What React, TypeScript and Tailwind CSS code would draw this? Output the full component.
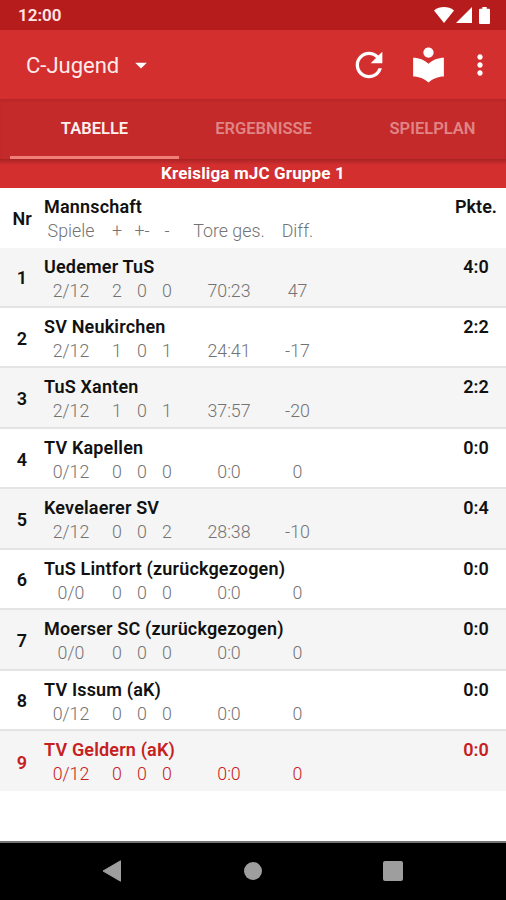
import { MdArrowDropDown, MdLocalLibrary, MdMoreVert, MdRefresh } from 'react-icons/md';

type Team = {
  name: string;
  games: string;
  won: string;
  drawn: string;
  lost: string;
  goals: string;
  diff: string;
  points: string;
  own?: boolean;
};

const teams: Team[] = [
  { name: 'Uedemer TuS', games: '2/12', won: '2', drawn: '0', lost: '0', goals: '70:23', diff: '47', points: '4:0' },
  { name: 'SV Neukirchen', games: '2/12', won: '1', drawn: '0', lost: '1', goals: '24:41', diff: '-17', points: '2:2' },
  { name: 'TuS Xanten', games: '2/12', won: '1', drawn: '0', lost: '1', goals: '37:57', diff: '-20', points: '2:2' },
  { name: 'TV Kapellen', games: '0/12', won: '0', drawn: '0', lost: '0', goals: '0:0', diff: '0', points: '0:0' },
  { name: 'Kevelaerer SV', games: '2/12', won: '0', drawn: '0', lost: '2', goals: '28:38', diff: '-10', points: '0:4' },
  { name: 'TuS Lintfort (zurückgezogen)', games: '0/0', won: '0', drawn: '0', lost: '0', goals: '0:0', diff: '0', points: '0:0' },
  { name: 'Moerser SC (zurückgezogen)', games: '0/0', won: '0', drawn: '0', lost: '0', goals: '0:0', diff: '0', points: '0:0' },
  { name: 'TV Issum (aK)', games: '0/12', won: '0', drawn: '0', lost: '0', goals: '0:0', diff: '0', points: '0:0' },
  { name: 'TV Geldern (aK)', games: '0/12', won: '0', drawn: '0', lost: '0', goals: '0:0', diff: '0', points: '0:0', own: true },
];

export default function App() {
  return (
    <div className="flex h-[900px] w-[506px] flex-col overflow-hidden bg-white font-['Roboto','Liberation_Sans',sans-serif]">
      <StatusBar />
      <Toolbar />
      <Tabs />
      <div className="flex h-[29px] shrink-0 items-center justify-center bg-linear-to-b from-[#a82424] via-[#d32f2f] via-20% to-[#d32f2f] font-bold text-[17px] text-white tracking-[0.15px]">
        Kreisliga mJC Gruppe 1
      </div>

      <main className="flex-1">
        <div className="flex h-[59.5px] bg-white text-[#111]">
          <Cells
            nr="Nr"
            team={{ name: 'Mannschaft', games: 'Spiele', won: '+', drawn: '+-', lost: '-', goals: 'Tore ges.', diff: 'Diff.', points: 'Pkte.' }}
          />
        </div>
        {teams.map((team, index) => (
          <div
            className={`flex h-[60.45px] ${index < teams.length - 1 ? 'border-[#e4e4e4] border-b-2' : ''} ${index % 2 === 0 ? 'bg-[#f5f5f5]' : 'bg-white'} ${team.own ? 'text-[#c62020]' : 'text-[#111]'}`}
            key={team.name}
          >
            <Cells nr={String(index + 1)} team={team} />
          </div>
        ))}
      </main>

      <NavigationBar />
    </div>
  );
}

function Cells({ nr, team }: { nr: string; team: Team }) {
  return (
    <>
      <div className="flex w-[44px] items-center justify-center pt-[2px] font-semibold text-[18px]">{nr}</div>
      <div className="flex-1 pt-[7px]">
        <div className="whitespace-nowrap font-semibold text-[18px] leading-[24px] tracking-[0.17px]">{team.name}</div>
        <div
          className={`flex whitespace-nowrap text-center font-[350] text-[17.8px] leading-[24px] ${team.own ? '' : 'text-[#737373]'}`}
        >
          <span className="w-[54px]">{team.games}</span>
          <span className="ml-[6.5px] w-[25px]">{team.won}</span>
          <span className="w-[25px]">{team.drawn}</span>
          <span className="w-[25px]">{team.lost}</span>
          <span className="w-[99px]">{team.goals}</span>
          <span className="w-[38px]">{team.diff}</span>
        </div>
      </div>
      <div className="w-[60px] pt-[7px] text-center font-semibold text-[18px] leading-[24px]">{team.points}</div>
    </>
  );
}

function StatusBar() {
  return (
    <div className="flex h-[30px] shrink-0 items-center bg-[#b71c1c] pr-[16px] pl-[18px] text-white">
      <span className="flex-1 pt-[2px] font-semibold text-[17px] text-[#ffe6e6]">12:00</span>
      <svg className="mr-[2px]" fill="currentColor" height="16" viewBox="0 0 20 16" width="20">
        <path d="M0 3.4C6 -1 14 -1 20 3.4L10 16z" />
      </svg>
      <svg className="mr-[7px]" fill="currentColor" height="16" viewBox="0 0 16 16" width="16">
        <path d="M16 0v16H0z" />
      </svg>
      <svg fill="currentColor" height="17" viewBox="0 0 11 17" width="11">
        <path d="M3.3 0h4.4v1.7H10a1 1 0 0 1 1 1V16a1 1 0 0 1-1 1H1a1 1 0 0 1-1-1V2.7a1 1 0 0 1 1-1h2.3z" />
      </svg>
    </div>
  );
}

function Toolbar() {
  return (
    <header className="flex h-[69px] shrink-0 items-center bg-[#d32f2f] pr-[10px] pl-[26px] text-white">
      <button className="flex items-center text-[#ffebeb]">
        <span className="pt-px text-[22px]">C-Jugend</span>
        <MdArrowDropDown className="ml-[8px] text-white" size={28} />
      </button>
      <div className="ml-auto flex items-center">
        <MdRefresh size={40} />
        <MdLocalLibrary className="ml-[19px]" size={41} />
        <MdMoreVert className="ml-[15px]" size={32} />
      </div>
    </header>
  );
}

function Tabs() {
  return (
    <nav className="flex h-[60px] shrink-0 overflow-hidden bg-[#c42a2a] pl-[10px] font-semibold text-[16.5px] shadow-[inset_0_2px_2px_#b92727]">
      <button className="w-[169px] shrink-0 border-[#ef7f78] border-b-3 pt-[4px] text-[#fff0f0]">TABELLE</button>
      <button className="w-[169px] shrink-0 pt-px text-[#e08585]">ERGEBNISSE</button>
      <button className="w-[169px] shrink-0 pt-px text-[#e08585]">SPIELPLAN</button>
    </nav>
  );
}

function NavigationBar() {
  return (
    <footer className="flex h-[59px] shrink-0 items-center justify-center border-[#757575] border-t-2 bg-black pb-[2px] text-[#9e9e9e]">
      <svg className="-ml-px" fill="currentColor" height="22" viewBox="0 0 20 22" width="20">
        <path d="M18.5 0.8V21.2L1 11z" stroke="currentColor" strokeLinejoin="round" />
      </svg>
      <div className="ml-[122px] size-[18px] rounded-full bg-current" />
      <div className="ml-[121px] size-[20px] rounded-[2px] bg-current" />
    </footer>
  );
}
